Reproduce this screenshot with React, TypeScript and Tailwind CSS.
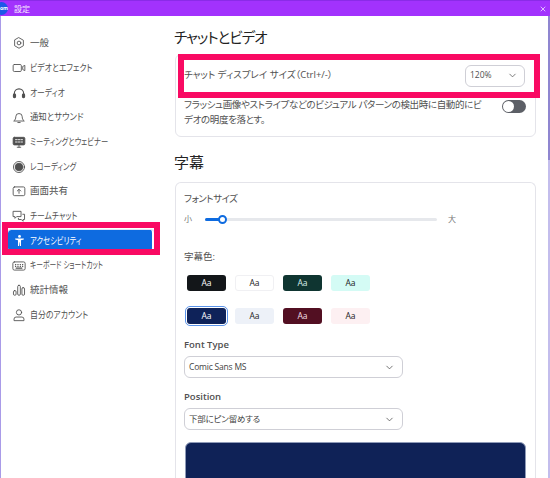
import { ChevronDown, X } from 'lucide-react';
import type { ReactNode } from 'react';

const FONT = '"Open Sans", "Noto Sans CJK JP", sans-serif';

const stroke = {
  width: 14,
  height: 14,
  viewBox: '0 0 24 24',
  fill: 'none',
  stroke: 'currentColor',
  strokeWidth: 1.5,
  strokeLinecap: 'round' as const,
  strokeLinejoin: 'round' as const,
};

const icons: Record<string, ReactNode> = {
  gear: (
    <svg {...stroke}>
      <path d="M12 3l7.5 4.3v9.4L12 21l-7.5-4.3V7.3z" />
      <circle cx="12" cy="12" r="3.2" />
    </svg>
  ),
  video: (
    <svg {...stroke}>
      <rect x="2" y="6" width="14" height="12" rx="2" />
      <path d="M19 9l3-1.5v9L19 15z" />
    </svg>
  ),
  headset: (
    <svg {...stroke} strokeWidth={2}>
      <path d="M4 16v-3a8 8 0 0 1 16 0v3" />
      <rect x="2.5" y="14" width="3.5" height="6" rx="1.5" fill="currentColor" />
      <rect x="18" y="14" width="3.5" height="6" rx="1.5" fill="currentColor" />
    </svg>
  ),
  bell: (
    <svg {...stroke}>
      <path d="M3.5 18.5c2-1.5 3-3.5 3-7a5.5 5.5 0 0 1 11 0c0 3.5 1 5.5 3 7z" />
      <path d="M10 21.5h4" />
    </svg>
  ),
  webinar: (
    <svg {...stroke}>
      <rect x="2" y="4" width="20" height="13" rx="2" fill="currentColor" />
      <path d="M6 8h3M11 8h3M16 8h2M6 12h3M11 12h3M16 12h2" stroke="#fff" />
      <path d="M12 17v4M9 21h6" />
    </svg>
  ),
  record: (
    <svg {...stroke}>
      <circle cx="12" cy="12" r="9.5" />
      <circle cx="12" cy="12" r="6.5" fill="currentColor" />
    </svg>
  ),
  share: (
    <svg {...stroke}>
      <rect x="2" y="5" width="20" height="15" rx="2.5" />
      <path d="M12 16V9.5M9 12l3-3 3 3" />
    </svg>
  ),
  chat: (
    <svg {...stroke}>
      <path d="M2.5 4h13v9H8l-3 3v-3H2.5z" />
      <path d="M18.5 9h3v9H19v3l-3-3h-5v-2" />
    </svg>
  ),
  person: (
    <svg width={13} height={13} viewBox="0 0 24 24" fill="currentColor">
      <circle cx="12" cy="4.5" r="2.6" />
      <path d="M4 8.2h16v2.1l-5.2 1.4V22h-2l-.5-7h-.6l-.5 7h-2V11.7L4 10.3z" />
    </svg>
  ),
  keyboard: (
    <svg {...stroke}>
      <rect x="1.5" y="5" width="21" height="14" rx="2.5" />
      <path d="M6 9.5h.5M10 9.5h.5M14 9.5h.5M18 9.5h.5M6 12.5h.5M10 12.5h.5M14 12.5h.5M18 12.5h.5M7 15.5h10" strokeWidth={2} />
    </svg>
  ),
  stats: (
    <svg {...stroke}>
      <rect x="2.5" y="13" width="4.5" height="8" rx="2" />
      <rect x="9.8" y="4" width="4.5" height="17" rx="2" />
      <rect x="17" y="8" width="4.5" height="13" rx="2" />
    </svg>
  ),
  user: (
    <svg {...stroke}>
      <circle cx="12" cy="7.5" r="4.5" />
      <path d="M3.5 21v-2a3.5 3.5 0 0 1 3.5-3.5h10a3.5 3.5 0 0 1 3.5 3.5v2z" />
    </svg>
  ),
};

// the katakana in the original UI font is much narrower than Noto's, so labels get squeezed
const navItems = [
  { icon: 'gear', label: '一般', squeeze: '' },
  { icon: 'video', label: 'ビデオとエフェクト', squeeze: 'scale-x-[0.83]' },
  { icon: 'headset', label: 'オーディオ', squeeze: 'scale-x-[0.82]' },
  { icon: 'bell', label: '通知とサウンド', squeeze: 'scale-x-[0.88]' },
  { icon: 'webinar', label: 'ミーティングとウェビナー', squeeze: 'scale-x-[0.77]' },
  { icon: 'record', label: 'レコーディング', squeeze: 'scale-x-[0.78]' },
  { icon: 'share', label: '画面共有', squeeze: '' },
  { icon: 'chat', label: 'チームチャット', squeeze: 'scale-x-[0.82]' },
  { icon: 'person', label: 'アクセシビリティ', active: true, squeeze: 'scale-x-[0.77]' },
  { icon: 'keyboard', label: 'キーボード ショートカット', squeeze: 'scale-x-[0.71]' },
  { icon: 'stats', label: '統計情報', squeeze: '' },
  { icon: 'user', label: '自分のアカウント', squeeze: 'scale-x-[0.83]' },
];

const swatches = [
  [
    { bg: 'bg-[#131619]', fg: 'text-white' },
    { bg: 'bg-white border border-[#f0f0f3]', fg: 'text-[#222]' },
    { bg: 'bg-[#0f3531]', fg: 'text-[#d8f0ea]' },
    { bg: 'bg-[#d4fbf5]', fg: 'text-[#222]' },
  ],
  [
    { bg: 'bg-[#0e2259]', fg: 'text-white', selected: true },
    { bg: 'bg-[#edf1f8]', fg: 'text-[#222]' },
    { bg: 'bg-[#520f22]', fg: 'text-[#f3dfe4]' },
    { bg: 'bg-[#fdf0f2]', fg: 'text-[#222]' },
  ],
];

function Dropdown({ value }: { value: string }) {
  return (
    <div className="mt-[4px] flex h-[22px] w-[219px] items-center justify-between rounded-[6px] border border-[#cfcfd6] pl-1 pr-[7px] text-[8.5px] tracking-[-0.2px] text-[#444]">
      <span>{value}</span>
      <ChevronDown size={11} strokeWidth={1.6} />
    </div>
  );
}

export default function App() {
  return (
    <div
      className='relative flex h-[478px] w-[550px] flex-col overflow-hidden bg-white text-[#505050] [font-feature-settings:"palt"]'
      style={{ fontFamily: FONT }}
    >
      {/* title bar */}
      <div className="flex h-[16px] shrink-0 items-center border-t border-[#8a2be8] bg-[#a232fd] text-white">
        <div className="flex h-[13px] w-[13px] -translate-x-[5px] items-center justify-end rounded-full bg-[#1c57e8] text-[5px] font-bold">
          om
        </div>
        <span className="ml-px text-[8px] opacity-90">設定</span>
        <X size={8} className="ml-auto mr-[3px]" />
      </div>

      <div className="flex min-h-0 flex-1 border-l border-[#a99be8]">
        {/* sidebar */}
        <nav className="flex w-[165px] shrink-0 flex-col pt-[15px]">
          {navItems.map((item) => (
            <div
              key={item.label}
              className={
                item.active
                  ? 'my-[1.85px] ml-[7px] mr-[12px] flex h-[21px] items-center gap-[4px] rounded-[3px] border-r-2 border-white bg-[#0e6be0] pl-[4px] text-[9.5px] text-white outline-1 outline-[#dfe6f5]'
                  : 'ml-[11px] flex h-[24.7px] items-center gap-[4px] text-[9.5px]'
              }
            >
              <span className="flex h-[14px] w-[14px] shrink-0 items-center justify-center">{icons[item.icon]}</span>
              <span className={`origin-left whitespace-nowrap ${item.squeeze}`}>{item.label}</span>
            </div>
          ))}
        </nav>

        {/* main column */}
        <main className="flex min-w-0 flex-1 flex-col pl-[9px] pr-[11px] pt-[11px]">
          <h1 className="-ml-px h-[21px] text-[14.5px] leading-[21px] tracking-[-1px] text-[#222]">チャットとビデオ</h1>

          <section className="mt-[6px] h-[83px] shrink-0 rounded-[6px] border border-[#e4e4ea] pl-[8px] pr-[9px]">
            <div className="flex h-[41px] items-center justify-between">
              <span className="text-[9.5px]">チャット ディスプレイ サイズ（Ctrl+/-）</span>
              <div className="mr-px flex h-[22px] w-[60px] items-center justify-between rounded-[6px] border border-[#cfcfd6] pl-1 pr-[6px] text-[8.5px]">
                120%
                <ChevronDown size={11} strokeWidth={1.6} />
              </div>
            </div>
            <div className="flex items-start justify-between">
              <p className="mt-px w-[300px] text-[9.5px] leading-[15px] tracking-[-0.35px]">
                フラッシュ画像やストライプなどのビジュアル パターンの検出時に自動的にビデオの明度を落とす。
              </p>
              <div className="mt-[4px] flex h-[13px] w-[24px] items-center rounded-full bg-[#5c5f66] pl-px">
                <div className="h-[11px] w-[11px] rounded-full bg-white" />
              </div>
            </div>
          </section>

          <h2 className="-ml-px mt-[13px] h-[24px] text-[15px] leading-[24px] text-[#222]">字幕</h2>

          <section className="mt-[8px] flex-1 rounded-t-[6px] border border-b-0 border-[#e4e4ea] px-[8px] pt-[9px]">
            <div className="text-[9.5px] leading-[14px] tracking-[-0.5px]">フォントサイズ</div>
            <div className="mt-[6px] flex h-[14px] items-center text-[8px] text-[#777]">
              <span className="w-[21px]">小</span>
              <div className="relative h-[3px] w-[232px] rounded-full bg-[#e6e8ec]">
                <div className="absolute left-0 top-0 h-[3px] w-[18px] rounded-full bg-[#0e6be0]" />
                <div className="absolute left-[13px] top-[-3px] h-[9px] w-[9px] rounded-full border-2 border-[#0e6be0] bg-white" />
              </div>
              <span className="ml-[11px]">大</span>
            </div>

            <div className="mt-[24px] text-[9.5px] leading-[14px]">字幕色:</div>
            <div className="mt-[11px] flex flex-col gap-[17px] pl-[3px]">
              {swatches.map((row, i) => (
                <div key={i} className="flex gap-[9px]">
                  {row.map((s, j) => (
                    <div
                      key={j}
                      className={`flex h-[16px] w-[39px] items-center justify-center rounded-[3px] text-[8.5px] ${s.bg} ${s.fg} ${
                        'selected' in s ? 'outline-[1.5px] outline-offset-[1px] outline-[#5a93ea]' : ''
                      }`}
                    >
                      Aa
                    </div>
                  ))}
                </div>
              ))}
            </div>

            <div className="mt-[14px] text-[9.5px] font-semibold leading-[14px]">Font Type</div>
            <Dropdown value="Comic Sans MS" />
            <div className="mt-[12px] text-[9.5px] font-semibold leading-[14px]">Position</div>
            <Dropdown value="下部にピン留めする" />
            <div className="ml-px mt-[12px] h-[60px] w-[341px] rounded-t-[6px] border border-[#8f9bb8] bg-[#0f2257]" />
          </section>
        </main>

        {/* scrollbar */}
        <div className="flex w-[3px] shrink-0 flex-col">
          <div className="ml-auto h-[144px] w-[2px] bg-[#8f86d0]" />
          <div className="ml-auto w-[2px] flex-1 bg-[#c3bdec]" />
        </div>
      </div>

      {/* pink annotation boxes */}
      <div className="pointer-events-none absolute left-[178px] top-[54px] h-[44px] w-[362px] border-[6px] border-[#f90a63]" />
      <div className="pointer-events-none absolute left-[2px] top-[222px] h-[33px] w-[158px] border-[6px] border-[#f90a63]" />
    </div>
  );
}
